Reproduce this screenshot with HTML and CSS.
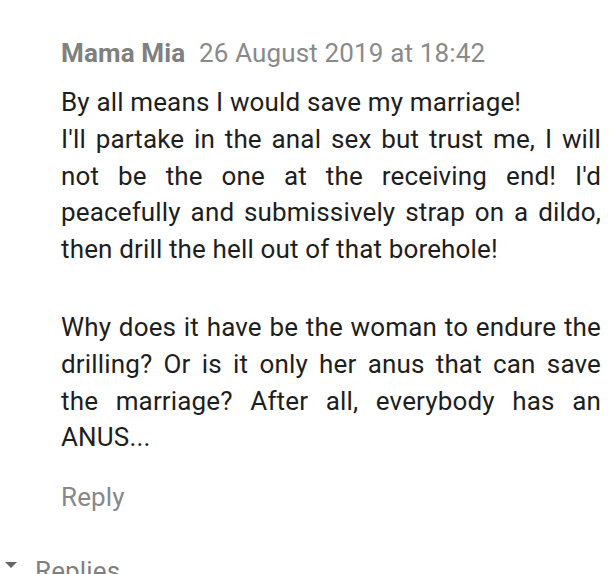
FILE: index.html
```html
<!DOCTYPE html>
<html lang="en">
<head>
  <meta charset="UTF-8" />
  <title>Comment</title>
  <link rel="stylesheet" href="styles.css">
</head>
<body>
  <div class="comment">
    <div class="comment-header">
      <span class="author">Mama Mia</span>
      <span class="date">26 August 2019 at 18:42</span>
    </div>
    <div class="comment-body">
      <p>By all means I would save my marriage!<br>I'll partake in the anal sex but trust me, I will not be the one at the receiving end! I'd peacefully and submissively strap on a dildo, then drill the hell out of that borehole!</p>
      <p>Why does it have be the woman to endure the drilling? Or is it only her anus that can save the marriage? After all, everybody has an ANUS...</p>
    </div>
    <a class="reply-link" href="#">Reply</a>
  </div>

  <div class="replies">
    <span class="toggle"></span>
    <span>Replies</span>
  </div>
</body>
</html>
```

FILE: styles.css
```css
* {
  box-sizing: border-box;
  margin: 0;
  padding: 0;
}

body {
  font-family: Roboto, 'Noto Sans', sans-serif;
  background-color: #fff;
  color: #222;
  font-size: 26px;
  letter-spacing: 0.15px;
}

.comment {
  padding: 35px 8px 0 61px;
}

.comment-header {
  color: #8a8a8a;
  line-height: 36px;
  white-space: nowrap;
}

.author {
  font-weight: bold;
  color: #808080;
  margin-right: 7px;
}

.comment-body {
  margin-top: 13px;
  line-height: 36.8px;
  text-align: justify;
  color: #1e1e1e;
}

.comment-body p + p {
  margin-top: 41px;
}

.reply-link {
  display: inline-block;
  margin-top: 23px;
  color: #888;
  text-decoration: none;
  line-height: 36px;
}

.replies {
  display: flex;
  align-items: flex-start;
  gap: 18px;
  padding: 38px 0 0 5px;
  color: #808080;
  line-height: 36px;
}

.toggle {
  margin-top: 9px;
  width: 0;
  height: 0;
  border-left: 6px solid transparent;
  border-right: 6px solid transparent;
  border-top: 6px solid #666;
}
```
